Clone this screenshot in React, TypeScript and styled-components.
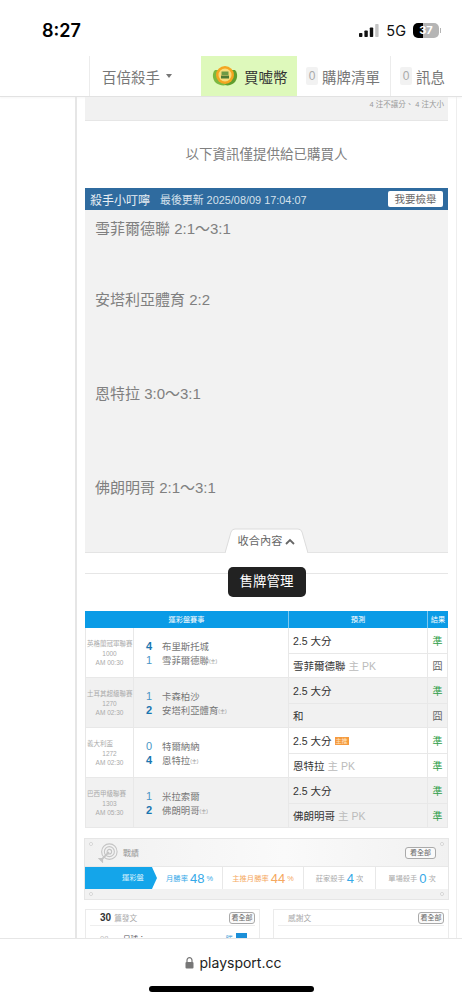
import React from "react";
import styled, { createGlobalStyle } from "styled-components";

const GlobalStyle = createGlobalStyle`
  html, body { margin: 0; padding: 0; background: #fff; }
  body { font-family: "Liberation Sans", "Noto Sans CJK TC", sans-serif; }
  * { box-sizing: border-box; }
`;

const Screen = styled.div`
  width: 462px;
  height: 1000px;
  display: flex;
  flex-direction: column;
  overflow: hidden;
  background: #fff;
`;

const StatusBar = styled.div`
  height: 56px;
  flex: none;
  display: flex;
  align-items: center;
  justify-content: space-between;
  padding: 4px 23px 0 42px;
  font-family: Inter, "Liberation Sans", sans-serif;
`;

const Clock = styled.span`
  font-size: 18px;
  font-weight: 600;
  color: #000;
`;

const StatusRight = styled.div`
  display: flex;
  align-items: center;
  gap: 7px;
  font-size: 14.5px;
  color: #111;
`;

const Battery = styled.div`
  position: relative;
  width: 26px;
  height: 15px;
  border-radius: 5px;
  background: linear-gradient(90deg, #000 37%, #b5b5b5 37%);
  color: #fff;
  font-size: 11px;
  font-weight: 700;
  text-align: center;
  line-height: 15px;

  &::after {
    content: "";
    position: absolute;
    top: 5px;
    right: -2px;
    width: 1px;
    height: 5px;
    background: #b5b5b5;
  }
`;

const NavBar = styled.nav`
  height: 41px;
  flex: none;
  display: flex;
  padding-left: 89px;
  border-bottom: 1px solid #e2e2e2;
  box-shadow: 0 1px 2px rgba(0, 0, 0, 0.04);
  color: #777;
  font-size: 14.5px;
`;

const NavItem = styled.div<{ $w: number; $pad: number; $green?: boolean; $line?: boolean }>`
  width: ${(p) => p.$w}px;
  display: flex;
  align-items: center;
  gap: 4px;
  padding-left: ${(p) => p.$pad}px;
  background: ${(p) => (p.$green ? "#def9bb" : "transparent")};
  color: ${(p) => (p.$green ? "#333" : "#777")};
  border-left: ${(p) => (p.$line ? "1px solid #ececec" : "none")};
`;

const Caret = styled.span`
  margin-left: 2px;
  border-left: 3.5px solid transparent;
  border-right: 3.5px solid transparent;
  border-top: 4px solid #777;
`;

const Count = styled.span`
  width: 12px;
  height: 18px;
  background: #f2f2f2;
  color: #aaa;
  border-radius: 2px;
  font-size: 12px;
  line-height: 18px;
  text-align: center;
`;

const Content = styled.main`
  flex: 1;
  min-height: 0;
  overflow: hidden;
  padding-left: 75px;
  padding-right: 5px;
`;

const Sheet = styled.div`
  border-left: 2px solid #e6e6e6;
  border-right: 1px solid #eee;
  padding: 0 8px 0 8px;
`;

const TopNote = styled.div`
  height: 24px;
  background: #f1f1f1;
  border-bottom: 1px solid #e6e6e6;
  padding: 1px 4px 0 0;
  text-align: right;
  font-size: 7.5px;
  color: #999;
`;

const Notice = styled.div`
  height: 67px;
  display: flex;
  align-items: center;
  justify-content: center;
  padding-bottom: 3px;
  font-size: 13.5px;
  color: #808080;
`;

const TipHeader = styled.div`
  height: 22px;
  display: flex;
  align-items: center;
  padding: 0 5px;
  background: #2f6b9f;
  color: #e8eef4;
`;

const TipTitle = styled.span`
  font-size: 12px;
`;

const TipTime = styled.span`
  margin-left: 10px;
  font-size: 10.9px;
  color: #d5e1ec;
`;

const ReportButton = styled.span`
  margin-left: auto;
  width: 55px;
  height: 16px;
  border-radius: 2px;
  background: #fff;
  color: #666;
  font-size: 10.5px;
  line-height: 16px;
  text-align: center;
`;

const TipBody = styled.div`
  height: 343px;
  display: flex;
  flex-direction: column;
  padding: 9px 10px 0;
  background: #f2f2f2;
  border-bottom: 1px solid #e4e4e4;
  color: #808080;
  font-size: 15px;
  line-height: 20px;
`;

const TipLine = styled.div<{ $gap: number }>`
  margin-bottom: ${(p) => p.$gap}px;
`;

const CollapseTab = styled.div`
  position: relative;
  margin-top: auto;
  margin-bottom: -1px;
  align-self: center;
  width: 83px;
  height: 25px;
  display: flex;
  align-items: center;
  justify-content: center;
  gap: 3px;
  padding-top: 1px;
  font-size: 11.2px;
  color: #666;
`;

const TabShape = styled.svg`
  position: absolute;
  inset: 0;
`;

const TabLabel = styled.span`
  position: relative;
  display: flex;
  align-items: center;
  gap: 3px;
`;

const ManageRow = styled.div`
  height: 58px;
  display: flex;
  justify-content: center;
  padding-top: 14px;
  background: linear-gradient(#e6e6e6, #e6e6e6) no-repeat 0 20px / 100% 1px;
`;

const ManageButton = styled.div`
  width: 78px;
  height: 30px;
  border-radius: 5px;
  background: #222;
  color: #fff;
  font-size: 13.5px;
  line-height: 30px;
  text-align: center;
`;

const Table = styled.div`
  width: 363px;
  display: grid;
  grid-template-columns: 49px 154px 139px 21px;
`;

const HeadCell = styled.div`
  height: 17px;
  background: #0a9be6;
  border-left: 1px solid #7cc8f0;
  color: #fff;
  font-size: 7.2px;
  line-height: 17px;
  text-align: center;
  white-space: nowrap;
  &:first-child { border-left: 0; grid-column: span 2; }
`;

const RowCell = styled.div<{ $alt: boolean }>`
  height: 50px;
  background: ${(p) => (p.$alt ? "#f1f1f1" : "#fff")};
  border-bottom: 1px solid #e8e8e8;
`;

const LeagueCell = styled(RowCell)`
  border-left: 1px solid #e8e8e8;
  border-right: 1px solid #e8e8e8;
  padding-top: 11px;
  font-size: 6.5px;
  line-height: 9.5px;
  color: #aaa;
  text-align: center;
  white-space: nowrap;
`;

const LeagueName = styled.div`
  text-align: left;
  padding-left: 1px;
  font-size: 6.5px;
`;

const TeamsCell = styled(RowCell)`
  padding: 11px 0 0 12px;
`;

const TeamLine = styled.div`
  display: flex;
  align-items: center;
  height: 14px;
  font-size: 9.4px;
  color: #777;
`;

const Score = styled.span<{ $win: boolean }>`
  width: 16px;
  font-size: 11px;
  font-weight: ${(p) => (p.$win ? 700 : 400)};
  color: ${(p) => (p.$win ? "#1a76b0" : "#4a96c6")};
`;

const Home = styled.span`
  font-size: 5px;
  color: #999;
`;

const Stack = styled(RowCell)`
  display: grid;
  grid-template-rows: 25px 24px;
`;

const PickCell = styled.div`
  display: flex;
  align-items: center;
  padding-left: 4px;
  font-size: 10.5px;
  color: #333;
  border-left: 1px solid #e8e8e8;
  &:nth-child(2) { border-top: 1px solid #e8e8e8; }
`;

const PickNote = styled.span`
  margin-left: 3px;
  color: #bbb;
`;

const MainTag = styled.span`
  width: 14px;
  height: 8px;
  margin-left: 3px;
  background: #f59a3e;
  color: #ffe3c0;
  font-size: 6px;
  line-height: 8px;
  text-align: center;
`;

const ResultCell = styled(PickCell)<{ $hit: boolean }>`
  justify-content: center;
  padding-left: 0;
  font-size: 10px;
  border-right: 1px solid #e8e8e8;
  color: ${(p) => (p.$hit ? "#2f9e48" : "#666")};
`;

const Record = styled.section`
  position: relative;
  margin: 10px -1px 0;
  width: 365px;
  height: 62px;
  border: 1px solid #e6e6e6;
  background: #f2f2f2;
`;

const Pin = styled.i<{ $right?: boolean; $bottom?: boolean }>`
  position: absolute;
  ${(p) => (p.$right ? "right: 4px;" : "left: 4px;")}
  ${(p) => (p.$bottom ? "bottom: 3px;" : "top: 3px;")}
  width: 4px;
  height: 4px;
  border-radius: 50%;
  border: 1px solid #d4d4d4;
  background: #fff;
`;

const RecordTop = styled.div`
  height: 27px;
  display: flex;
  align-items: center;
  padding: 0 12px 0 13px;
  background: linear-gradient(90deg, #f1f1f1, #fafafa 55%, #f1f1f1);
  font-size: 8px;
  color: #999;
`;

const RecordTitle = styled.span`
  margin-left: 5px;
`;

const ViewAll = styled.span<{ $w?: number }>`
  margin-left: auto;
  width: ${(p) => p.$w ?? 31}px;
  height: 12px;
  border: 1px solid #aaa;
  border-radius: 3px;
  background: #fafafa;
  color: #666;
  font-size: 7px;
  line-height: 10px;
  text-align: center;
  white-space: nowrap;
`;

const RecordTabs = styled.div`
  height: 23px;
  display: grid;
  grid-template-columns: 72px 65px 81px 72px 73px;
  background: #fff;
  border-top: 1px solid #e8e8e8;
`;

const ActiveTab = styled.div`
  padding-left: 37px;
  background: #14a5ea;
  color: #dff3fd;
  font-size: 7.3px;
  line-height: 22px;
  clip-path: polygon(0 0, 93% 0, 100% 50%, 93% 100%, 0 100%);
  white-space: nowrap;
`;

const RateTab = styled.div<{ $color: string; $line?: boolean }>`
  display: flex;
  align-items: center;
  justify-content: center;
  gap: 2px;
  border-left: ${(p) => (p.$line ? "1px solid #e8e8e8" : "none")};
  color: ${(p) => p.$color};
  font-size: 7.3px;
  white-space: nowrap;
`;

const RateNum = styled.b<{ $color?: string }>`
  font-weight: 400;
  font-size: 13px;
  color: ${(p) => p.$color ?? "inherit"};
`;

const CardRow = styled.div`
  margin-top: 9px;
  width: 364px;
  display: grid;
  grid-template-columns: 175px 176px;
  column-gap: 13px;
`;

const SmallCard = styled.div`
  height: 60px;
  border: 1px solid #ebebeb;
  padding: 0 4px;
`;

const CardHead = styled.div`
  height: 16px;
  display: flex;
  align-items: center;
  padding-left: 10px;
  border-bottom: 1px solid #eee;
  font-size: 7.7px;
  color: #aaa;
`;

const CardCount = styled.b`
  margin-right: 3px;
  font-size: 10px;
  color: #333;
`;

const CardLine = styled.div`
  display: flex;
  align-items: center;
  height: 13px;
  margin-top: 5px;
  padding: 2px 8px 0 10px;
  font-size: 7.5px;
  color: #555;
`;

const CardSerial = styled.span`
  width: 23px;
  color: #bbb;
`;

const CardWin = styled.span`
  margin-left: auto;
  margin-right: 3px;
  color: #4a9fd8;
`;

const CardBox = styled.span`
  width: 11px;
  height: 11px;
  background: #1b8fd8;
`;

const BottomBar = styled.footer`
  height: 62px;
  flex: none;
  display: flex;
  flex-direction: column;
  align-items: center;
  border-top: 1px solid #e6e6e6;
  background: #fff;
`;

const UrlLine = styled.div`
  height: 47px;
  display: flex;
  align-items: center;
  gap: 6px;
  margin-left: 4px;
  font-family: Inter, "Liberation Sans", sans-serif;
  font-size: 14px;
  color: #222;
`;

const HomeIndicator = styled.div`
  width: 165px;
  height: 6px;
  border-radius: 3px;
  background: #000;
`;

function Signal() {
  return (
    <svg width="20" height="13" viewBox="0 0 20 13">
      <rect x="0" y="9" width="3.4" height="4" rx="0.8" fill="#111" />
      <rect x="5.4" y="6.5" width="3.4" height="6.5" rx="0.8" fill="#111" />
      <rect x="10.8" y="3.5" width="3.4" height="9.5" rx="0.8" fill="#111" />
      <rect x="16.2" y="0" width="3.4" height="13" rx="0.8" fill="#c4c4c4" />
    </svg>
  );
}

function CoinLogo() {
  return (
    <svg width="26" height="22" viewBox="0 0 26 22" style={{ marginRight: 2 }}>
      <path d="M3 5C0 8 0 14 4 18c3 2 7 3 10 2L8 5z" fill="#7db840" />
      <path d="M23 5c3 3 3 9-1 13-3 2-6 3-9 2l5-15z" fill="#5f9e2e" />
      <circle cx="13" cy="10" r="9" fill="#f4a521" />
      <circle cx="13" cy="10" r="6.5" fill="#f9dc7a" />
      <rect x="9.5" y="6.5" width="7" height="3.5" fill="#6f9a45" />
      <rect x="9" y="10.5" width="8" height="3" fill="#4f7a35" />
    </svg>
  );
}

function Chevron() {
  return (
    <svg width="10" height="7" viewBox="0 0 10 7">
      <path d="M1 6l4-4 4 4" fill="none" stroke="#666" strokeWidth="1.8" />
    </svg>
  );
}

function Target() {
  return (
    <svg width="20" height="20" viewBox="0 0 22 22" fill="none" stroke="#c4c4c4" strokeWidth="1.2">
      <circle cx="12.5" cy="9.5" r="8.5" />
      <circle cx="12.5" cy="9.5" r="5.5" />
      <circle cx="12.5" cy="9.5" r="2.5" />
      <path d="M12 10L3 19" strokeWidth="2" />
      <path d="M1 17h4v4z" fill="#c4c4c4" />
    </svg>
  );
}

function Lock() {
  return (
    <svg width="9" height="12" viewBox="0 0 9 12">
      <path d="M2 5V3.2a2.5 2.5 0 0 1 5 0V5" fill="none" stroke="#777" strokeWidth="1.2" />
      <rect x="0.5" y="5" width="8" height="6.5" rx="1" fill="#777" />
    </svg>
  );
}

type Match = {
  league: string;
  code: string;
  time: string;
  teams: [number, string, number, string];
  pick: string;
  tag?: boolean;
  side: string;
  note?: string;
  results: [string, string];
};

const matches: Match[] = [
  {
    league: "英格蘭冠軍聯賽", code: "1000", time: "AM 00:30",
    teams: [4, "布里斯托城", 1, "雪菲爾德聯"],
    pick: "2.5 大分", side: "雪菲爾德聯", note: "主 PK", results: ["準", "囧"],
  },
  {
    league: "土耳其超級聯賽", code: "1270", time: "AM 02:30",
    teams: [1, "卡森柏沙", 2, "安塔利亞體育"],
    pick: "2.5 大分", side: "和", results: ["準", "囧"],
  },
  {
    league: "義大利盃", code: "1272", time: "AM 02:30",
    teams: [0, "特爾納納", 4, "恩特拉"],
    pick: "2.5 大分", tag: true, side: "恩特拉", note: "主 PK", results: ["準", "準"],
  },
  {
    league: "巴西甲級聯賽", code: "1303", time: "AM 05:30",
    teams: [1, "米拉索爾", 2, "佛朗明哥"],
    pick: "2.5 大分", side: "佛朗明哥", note: "主 PK", results: ["準", "準"],
  },
];

const tips = [
  { text: "雪菲爾德聯 2:1～3:1", gap: 51 },
  { text: "安塔利亞體育 2:2", gap: 74 },
  { text: "恩特拉 3:0～3:1", gap: 74 },
  { text: "佛朗明哥 2:1～3:1", gap: 0 },
];

export default function App() {
  return (
    <Screen>
      <GlobalStyle />
      <StatusBar>
        <Clock>8:27</Clock>
        <StatusRight>
          <Signal />
          <span>5G</span>
          <Battery>37</Battery>
        </StatusRight>
      </StatusBar>

      <NavBar>
        <NavItem $w={112} $pad={12} $line>
          百倍殺手<Caret />
        </NavItem>
        <NavItem $w={96} $pad={11} $green>
          <CoinLogo />買嘘幣
        </NavItem>
        <NavItem $w={93} $pad={9}>
          <Count>0</Count>購牌清單
        </NavItem>
        <NavItem $w={72} $pad={9} $line>
          <Count>0</Count>訊息
        </NavItem>
      </NavBar>

      <Content>
        <Sheet>
          <TopNote>4 注不讓分、 4 注大小</TopNote>
          <Notice>以下資訊僅提供給已購買人</Notice>

          <TipHeader>
            <TipTitle>殺手小叮嚀</TipTitle>
            <TipTime>最後更新 2025/08/09 17:04:07</TipTime>
            <ReportButton>我要檢舉</ReportButton>
          </TipHeader>
          <TipBody>
            {tips.map((t) => (
              <TipLine key={t.text} $gap={t.gap}>{t.text}</TipLine>
            ))}
            <CollapseTab>
              <TabShape width="83" height="25" viewBox="0 0 83 25">
                <path d="M0 25L6 4Q7 1 10 1H73Q76 1 77 4L83 25Z" fill="#fff" />
                <path d="M0 25L6 4Q7 1 10 1H73Q76 1 77 4L83 25" fill="none" stroke="#dcdcdc" />
              </TabShape>
              <TabLabel>
                收合內容 <Chevron />
              </TabLabel>
            </CollapseTab>
          </TipBody>

          <ManageRow>
            <ManageButton>售牌管理</ManageButton>
          </ManageRow>

          <Table>
            <HeadCell>運彩盤賽事</HeadCell>
            <HeadCell>預測</HeadCell>
            <HeadCell>結果</HeadCell>
            {matches.map((m, i) => {
              const alt = i % 2 === 1;
              return (
                <React.Fragment key={m.code}>
                  <LeagueCell $alt={alt}>
                    <LeagueName>{m.league}</LeagueName>
                    <div>{m.code}</div>
                    <div>{m.time}</div>
                  </LeagueCell>
                  <TeamsCell $alt={alt}>
                    <TeamLine>
                      <Score $win={m.teams[0] > m.teams[2]}>{m.teams[0]}</Score>
                      {m.teams[1]}
                    </TeamLine>
                    <TeamLine>
                      <Score $win={m.teams[2] > m.teams[0]}>{m.teams[2]}</Score>
                      {m.teams[3]}<Home>(主)</Home>
                    </TeamLine>
                  </TeamsCell>
                  <Stack $alt={alt}>
                    <PickCell>
                      {m.pick}
                      {m.tag && <MainTag>主推</MainTag>}
                    </PickCell>
                    <PickCell>
                      {m.side}
                      {m.note && <PickNote>{m.note}</PickNote>}
                    </PickCell>
                  </Stack>
                  <Stack $alt={alt}>
                    <ResultCell $hit={m.results[0] === "準"}>{m.results[0]}</ResultCell>
                    <ResultCell $hit={m.results[1] === "準"}>{m.results[1]}</ResultCell>
                  </Stack>
                </React.Fragment>
              );
            })}
          </Table>

          <Record>
            <RecordTop>
              <Target />
              <RecordTitle>戰績</RecordTitle>
              <ViewAll>看全部</ViewAll>
            </RecordTop>
            <RecordTabs>
              <ActiveTab>運彩盤</ActiveTab>
              <RateTab $color="#35a9e8">
                月勝率 <RateNum>48</RateNum> %
              </RateTab>
              <RateTab $color="#f5a860" $line>
                主推月勝率 <RateNum>44</RateNum> %
              </RateTab>
              <RateTab $color="#aaa" $line>
                莊家殺手 <RateNum $color="#35a9e8">4</RateNum> 次
              </RateTab>
              <RateTab $color="#aaa" $line>
                單場殺手 <RateNum $color="#35a9e8">0</RateNum> 次
              </RateTab>
            </RecordTabs>
            <Pin />
            <Pin $right />
            <Pin $bottom />
            <Pin $right $bottom />
          </Record>

          <CardRow>
            <SmallCard>
              <CardHead>
                <CardCount>30</CardCount>篇發文
                <ViewAll $w={26}>看全部</ViewAll>
              </CardHead>
              <CardLine>
                <CardSerial>08</CardSerial>足球：
                <CardWin>勝</CardWin>
                <CardBox />
              </CardLine>
            </SmallCard>
            <SmallCard>
              <CardHead>
                感謝文
                <ViewAll $w={26}>看全部</ViewAll>
              </CardHead>
            </SmallCard>
          </CardRow>
        </Sheet>
      </Content>

      <BottomBar>
        <UrlLine>
          <Lock />
          playsport.cc
        </UrlLine>
        <HomeIndicator />
      </BottomBar>
    </Screen>
  );
}
